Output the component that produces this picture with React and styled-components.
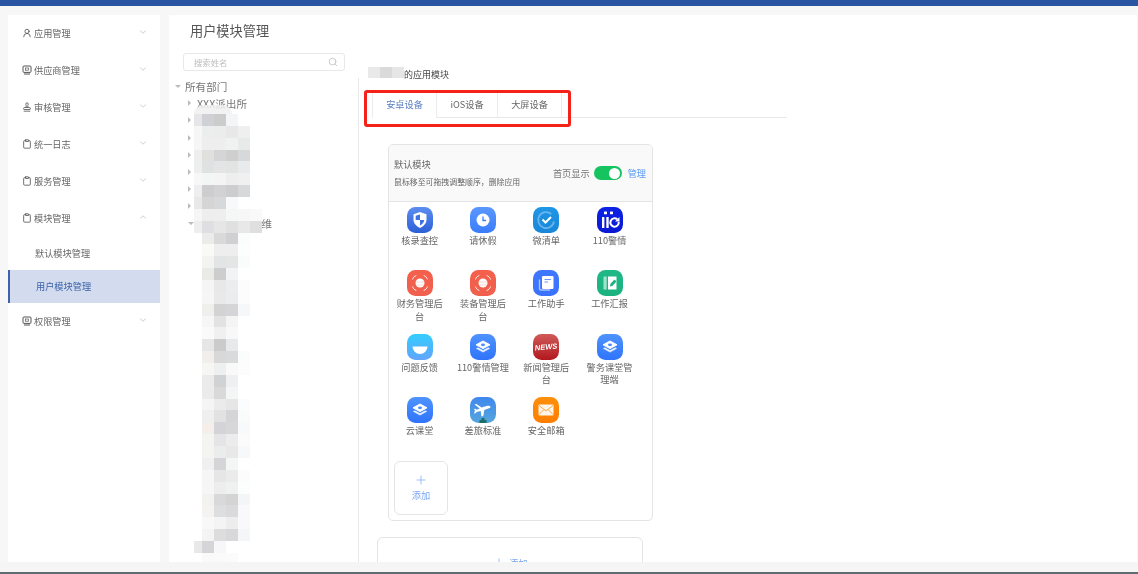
import React from 'react';
import styled, { createGlobalStyle } from 'styled-components';
import { ChevronDown, ChevronUp, Search, Plus, UserRound, Stamp, Clipboard } from 'lucide-react';

const GlobalStyle = createGlobalStyle`
    html, body {
        margin: 0;
        padding: 0;
        background: #f7f7f7;
    }
    * {
        box-sizing: border-box;
    }
`

function ScreenIcon() {
    return (
        <svg width="10" height="10" viewBox="0 0 10 10" fill="none" stroke="#555" strokeWidth="1">
            <rect x="1" y="1" width="8" height="6.4" rx="1" />
            <rect x="3.6" y="3" width="2.8" height="2.2" strokeWidth=".7" />
            <path d="M2 9h6" />
        </svg>
    )
}

const menu = [
    { name: '应用管理', icon: <UserRound size={10} color="#555" /> },
    { name: '供应商管理', icon: <ScreenIcon /> },
    { name: '审核管理', icon: <Stamp size={10} color="#555" /> },
    { name: '统一日志', icon: <Clipboard size={10} color="#555" /> },
    { name: '服务管理', icon: <Clipboard size={10} color="#555" /> },
    { name: '模块管理', icon: <Clipboard size={10} color="#555" />, open: true },
]

// 打码区域: 每行一组颜色, 第一格窄 (null 表示空)
const mosaicRows = [
    ['#e6e6e8', '#d0d1d5', '#cccccc', '#f4f5f6'],
    ['#f6f6f6', '#ecedED', '#ebecec', '#e8e8e9', '#efefef'],
    ['#f6f6f6', '#eeeeee', '#eeeeee', '#f0f1f1', '#e8e9e9'],
    ['#eeeeee', '#e0e0de', '#d5d5d7', '#cfcfd0', '#d7d8da'],
    ['#eeeeee', '#e0e1e3', '#e4e4e5', '#e2e3e3', '#e9eaeb'],
    ['#f7f7f7', '#f4f5f5', '#f4f4f4', '#eeeeee', '#f0f0f0'],
    ['#eeeeee', '#cdcdcf', '#d2d2d3', '#cdcdd0', '#d7d8da'],
    ['#e8e8e8', '#d5d5d5', '#d7d8da', '#f8f9fb'],
    ['#f6f6f6', '#eeeeee', '#eeeeee', '#f5f6f6', '#f7f7f7', '#f9f9f9'],
    ['#eeeeee', '#dfdfe1', '#e6e6e7', '#e0e0e1', '#e8e8e9', '#dfdfe0'],
    [null, '#ebebea', '#d9d9da', '#d0d0d2', '#fbfdfd'],
    [null, '#f9f9f8', '#eeeeee', '#eeeeee', '#fcfdfd'],
    [null, '#f3f3f2', '#e3e4e5', '#e4e5e5', '#fafcfc'],
    [null, '#eaeae9', '#cdcdce', '#f2f3f4'],
    [null, '#f5f5f5', '#e8e8e9', '#ecedee', '#fcfcfc'],
    [null, '#f6f6f6', '#e9e9ea', '#ebecee', '#fcfcfc'],
    [null, '#efefee', '#d3d3d4', '#d5d5d7', '#f6f7f9'],
    [null, '#f6f6f6', '#e2e2e3', '#f4f4f4'],
    [null, '#fafafa', '#f0f0f0', '#f8f8f8'],
    [null, '#e6e6e6', '#cbcbcb', '#e8e9eb'],
    [null, '#f0efee', '#d8d8d8', '#d9dadc', '#fbfdfd'],
    [null, '#f6f6f5', '#eef0ef', '#f9f9f9', '#fcfcfc'],
    [null, '#ebebeb', '#d1d2d4', '#eff0f1'],
    [null, '#ebebeb', '#d9d9d9', '#f4f6f5'],
    [null, '#f5f5f5', '#ebebeb', '#e6e6e7', '#fbfcfd'],
    [null, '#efefef', '#e2e2e2', '#d5d5d8', '#fafbfb'],
    [null, '#f4efeb', '#d4d4d8', '#d7d7da', '#f8f9fb'],
    [null, '#f4f4f3', '#e5e5e7', '#ececed', '#fbfbfc'],
    [null, '#f4f4f3', '#ebedec', '#e8e8e9', '#f7f8fa'],
    [null, '#f0f0f0', '#d5d5d8', '#f4f6f5'],
    [null, '#f6f6f6', '#e6e6e6', '#ebebec', '#fcfcfc'],
    [null, '#f6f6f6', '#ededed', '#eff0f0', '#fcfdfd'],
    [null, '#f2f2f1', '#d9d9dc', '#d4d4d4', '#f4f5f6'],
    [null, '#f4f3f1', '#dddee0', '#dadadc', '#f9f9fb'],
    [null, '#f8f8f8', '#f3f4f3', '#ededed', '#f9f9fb'],
    [null, '#f4f4f4', '#dddddd', '#d8d8db', '#f5f6f8'],
    ['#e8e8e8', '#d5d5d8', '#f7f7fa'],
    [null, '#fafafa', '#fafafa', '#fbfbfb'],
]

function Squircle({ id, from, to, children }) {
    return (
        <svg width="26" height="26" viewBox="0 0 26 26">
            <defs>
                <linearGradient id={id} x1="0" y1="0" x2="0" y2="1">
                    <stop offset="0" stopColor={from} />
                    <stop offset="1" stopColor={to} />
                </linearGradient>
            </defs>
            <rect width="26" height="26" rx="8.5" fill={`url(#${id})`} />
            {children}
        </svg>
    )
}

const Layers = () => (
    <>
        <path d="M13 7l7 3.800-7 3.800-7-3.800z" fill="#fff" stroke="#fff" strokeWidth="1" strokeLinejoin="round" />
        <ellipse cx="13" cy="10.800" rx="2" ry="1.400" fill="#4a8bff" />
        <path d="M6.500 14.500l1.300-.7 5.200 2.800 5.200-2.800 1.300.7-6.500 3.600z" fill="#fff" stroke="#fff" strokeWidth=".6" strokeLinejoin="round" opacity=".92" />
    </>
)

const Globe = () => (
    <>
        <circle cx="13" cy="13" r="4.500" fill="#fff" />
        <path d="M9 12h8M9.500 15h7" stroke="#f9b0a6" strokeWidth=".5" />
        <path d="M5.500 9.500C6 7.600 7.500 6 9.300 5.500M16.700 5.500c1.800.5 3.300 2.100 3.800 4M20.500 16.500c-.5 1.900-2 3.500-3.800 4M9.300 20.500c-1.800-.5-3.300-2.100-3.800-4" fill="none" stroke="#fff" strokeWidth="1" opacity=".85" />
    </>
)

function NewsText({ x, y, children }) {
    return <NewsLabel x={x} y={y} textAnchor="middle" transform="rotate(-5 13 13)">{children}</NewsLabel>
}

const apps = [
    {
        name: '核录查控',
        icon: (
            <Squircle id="a1" from="#5c8df0" to="#2b60d6">
                <path d="M13 5l6.500 2.300v5.200c0 4-2.800 6.800-6.500 8.500-3.700-1.700-6.500-4.500-6.500-8.500V7.300z" fill="#fff" />
                <path d="M13 7.500v5.500H8.700V8.800zM13 13h4.300c-.3 2.700-2 4.400-4.300 5.600z" fill="#3f72e2" />
            </Squircle>
        ),
    },
    {
        name: '请休假',
        icon: (
            <Squircle id="a2" from="#5a97ff" to="#3a7dfb">
                <circle cx="13" cy="13" r="6.500" fill="#fff" />
                <path d="M13 9.500V13.500h3" fill="none" stroke="#3a7dfb" strokeWidth="1.300" />
            </Squircle>
        ),
    },
    {
        name: '微清单',
        icon: (
            <Squircle id="a3" from="#1f96e6" to="#1a86d8">
                <path d="M18.300 7A8 8 0 1 0 21 14.500" fill="none" stroke="#66b5ee" strokeWidth="1.800" />
                <path d="M9.500 12.500l3 3 5.500-5.500" fill="none" stroke="#fff" strokeWidth="2" />
            </Squircle>
        ),
    },
    {
        name: '110警情',
        icon: (
            <Squircle id="a4" from="#0d22e6" to="#0a18d2">
                <rect x="7" y="4.500" width="3" height="2.800" rx=".6" fill="#fff" />
                <rect x="13" y="4.500" width="3" height="2.800" rx=".6" fill="#fff" />
                <rect x="5" y="10" width="2.400" height="11" rx=".6" fill="#fff" />
                <rect x="9.300" y="10" width="2.400" height="11" rx=".6" fill="#fff" />
                <path d="M20.300 12.300A4.200 4.200 0 1 0 21.700 14.800" fill="none" stroke="#fff" strokeWidth="2" />
                <path d="M22.500 10v4.500h-4.500z" fill="#fff" />
            </Squircle>
        ),
    },
    {
        name: '财务管理后台',
        icon: <Squircle id="a5" from="#f4604c" to="#f0604e"><Globe /></Squircle>,
    },
    {
        name: '装备管理后台',
        icon: <Squircle id="a6" from="#f4604c" to="#f0604e"><Globe /></Squircle>,
    },
    {
        name: '工作助手',
        icon: (
            <Squircle id="a7" from="#4077ff" to="#3b72fb">
                <rect x="9" y="6" width="11.500" height="13" rx="1.200" fill="#fff" />
                <path d="M11.500 9.500h6.500M11.500 12h3.500" stroke="#6b95ff" strokeWidth="1" />
                <path d="M6.500 9.500v9a1.500 1.500 0 001.500 1.500h9" fill="none" stroke="#a9c3ff" strokeWidth="1.400" />
            </Squircle>
        ),
    },
    {
        name: '工作汇报',
        icon: (
            <Squircle id="a8" from="#1fb886" to="#1bb280">
                <rect x="6.500" y="6.500" width="3.200" height="13" fill="#9fe3cb" />
                <path d="M11 6.500h8.500v13H11z" fill="#fff" />
                <path d="M13 16.500l.5-2.700 4-4.300 2 2-4 4.300z" fill="#1bb280" />
            </Squircle>
        ),
    },
    {
        name: '问题反馈',
        icon: (
            <Squircle id="a9" from="#33cdff" to="#63a4fb">
                <path d="M5.500 12.500h15a7.500 7.500 0 01-15 0z" fill="#fff" />
            </Squircle>
        ),
    },
    {
        name: '110警情管理',
        icon: <Squircle id="a10" from="#4f93ff" to="#2f74fb"><Layers /></Squircle>,
    },
    {
        name: '新闻管理后台',
        icon: (
            <Squircle id="a11" from="#cf5b58" to="#b2181e">
                <NewsText x="13" y="15.500">NEWS</NewsText>
            </Squircle>
        ),
    },
    {
        name: '警务课堂管理端',
        icon: <Squircle id="a12" from="#4f93ff" to="#2f74fb"><Layers /></Squircle>,
    },
    {
        name: '云课堂',
        icon: <Squircle id="a13" from="#4f93ff" to="#2f74fb"><Layers /></Squircle>,
    },
    {
        name: '差旅标准',
        icon: (
            <Squircle id="a14" from="#3f88ee" to="#55a6dc">
                <path d="M4.500 7.500l2-.5 5 3.500 6-1.700c1.500-.4 3 .4 3 1.200s-1 1.200-2.200 1.600l-4 1.400-1 6-1.800.5-.8-5.500-4 1-1.500 1.500-1.200-.3 1-2.700-1-1.500 1.500-.3 1.200 1 3-1.300z" fill="#fff" />
                <path d="M9.500 26v-3h2v-2h3v2h2v3z" fill="#1b6f66" />
            </Squircle>
        ),
    },
    {
        name: '安全邮箱',
        icon: (
            <Squircle id="a15" from="#ff8f0a" to="#ff7e00">
                <rect x="5.500" y="7.500" width="15" height="11" rx="1" fill="#fff" opacity=".92" />
                <path d="M6 8.500l7 5.500 7-5.500M6 17.500l5-5M20 17.500l-5-5" fill="none" stroke="#ff9c2e" strokeWidth=".9" />
            </Squircle>
        ),
    },
]

export default function App() {
    return (
        <Page>
            <GlobalStyle />
            <TopBar />
            <Workspace>
                <Sidebar>
                    {menu.map((item) => (
                        <MenuItem key={item.name}>
                            <MenuLabel>{item.icon}{item.name}</MenuLabel>
                            {item.open ? <ChevronUp size={10} color="#c4c4c4" /> : <ChevronDown size={10} color="#c4c4c4" />}
                        </MenuItem>
                    ))}
                    <SubItem>默认模块管理</SubItem>
                    <SubItem $active>用户模块管理</SubItem>
                    <MenuItem>
                        <MenuLabel><ScreenIcon />权限管理</MenuLabel>
                        <ChevronDown size={10} color="#c4c4c4" />
                    </MenuItem>
                </Sidebar>
                <Main>
                    <Title>用户模块管理</Title>
                    <Content>
                        <LeftPanel>
                            <SearchBox>
                                搜索姓名
                                <Search size={10} color="#c0c0c0" />
                            </SearchBox>
                            <Tree>
                                <TreeRow>
                                    <ArrowDown />
                                    所有部门
                                </TreeRow>
                                <TreeRow $child>
                                    <ArrowRight />
                                    XXX派出所
                                </TreeRow>
                                {[1, 2, 3, 4, 5, 6].map((n) => (
                                    <TreeRow $child key={n}>
                                        <ArrowRight />
                                    </TreeRow>
                                ))}
                                <TreeRow $child>
                                    <ArrowDown />
                                    <HiddenName>维</HiddenName>
                                </TreeRow>
                                <Mosaic>
                                    <MosaicCap />
                                    {mosaicRows.map((row, i) => (
                                        <MosaicRow key={i}>
                                            {row.map((color, j) => (
                                                <MosaicCell key={j} $wide={j > 0} $color={color} />
                                            ))}
                                        </MosaicRow>
                                    ))}
                                </Mosaic>
                            </Tree>
                        </LeftPanel>
                        <RightPanel>
                            <Heading>
                                <HeadingMosaic>
                                    <MosaicCell $wide $color="#e9e9e9" />
                                    <MosaicCell $wide $color="#dadada" />
                                    <MosaicCell $wide $color="#e6e6e6" />
                                </HeadingMosaic>
                                的应用模块
                            </Heading>
                            <Tabs>
                                <Tab $active $width={65}>安卓设备</Tab>
                                <Tab $width={61}>iOS设备</Tab>
                                <Tab $width={64}>大屏设备</Tab>
                                <RedMark />
                            </Tabs>
                            <Card>
                                <CardHead>
                                    <div>
                                        <CardTitle>默认模块</CardTitle>
                                        <CardHint>鼠标移至可拖拽调整顺序，删除应用</CardHint>
                                    </div>
                                    <HeadActions>
                                        首页显示
                                        <Toggle />
                                        <ManageLink>管理</ManageLink>
                                    </HeadActions>
                                </CardHead>
                                <AppGrid>
                                    {apps.map((app) => (
                                        <AppItem key={app.name}>
                                            {app.icon}
                                            <AppName>{app.name}</AppName>
                                        </AppItem>
                                    ))}
                                </AppGrid>
                                <AddTile>
                                    <Plus size={14} strokeWidth={1.2} />
                                    添加
                                </AddTile>
                            </Card>
                            <NextCard>
                                <Plus size={14} strokeWidth={1.2} />
                                <span>添加</span>
                            </NextCard>
                        </RightPanel>
                    </Content>
                </Main>
            </Workspace>
            <BottomStrip />
        </Page>
    )
}

const Page = styled.div`
    width: 1138px;
    height: 574px;
    overflow: hidden;
    display: flex;
    flex-direction: column;
    background: #f7f7f7;
    font-family: "Noto Sans CJK SC", "Liberation Sans", sans-serif;
    color: #666;
    filter: blur(0.4px);
`

const TopBar = styled.div`
    height: 6px;
    background: #2a55a3;
`

const Workspace = styled.div`
    display: flex;
    height: 547px;
    margin-top: 9px;
    padding-left: 8px;
`

const Sidebar = styled.div`
    width: 152px;
    margin-right: 9px;
    background: #fff;
`

const MenuItem = styled.div`
    height: 37px;
    padding: 0 12px 2px 14px;
    display: flex;
    align-items: center;
    justify-content: space-between;
    font-size: 9.2px;
    color: #666;
    > svg {
        margin-top: -2px;
    }
`

const MenuLabel = styled.span`
    display: flex;
    align-items: center;
    gap: 2px;
    svg {
        margin-top: 1px;
    }
`

const SubItem = styled.div`
    height: 33px;
    display: flex;
    align-items: center;
    font-size: 9.2px;
    padding-bottom: 2px;
    padding-left: ${(props) => (props.$active ? '26px' : '27px')};
    color: ${(props) => (props.$active ? '#3d62a8' : '#666')};
    background: ${(props) => (props.$active ? '#d2dcee' : 'transparent')};
    border-left: ${(props) => (props.$active ? '2px solid #3f62ae' : 'none')};
`

const Main = styled.div`
    width: 968px;
    background: #fff;
    overflow: hidden;
`

const Title = styled.div`
    height: 38px;
    padding: 7px 0 0 21px;
    font-size: 13.2px;
    line-height: 18px;
    color: #555;
`

const Content = styled.div`
    display: flex;
    height: 509px;
`

const LeftPanel = styled.div`
    width: 190px;
    display: flex;
    flex-direction: column;
`

const SearchBox = styled.div`
    width: 162px;
    height: 18px;
    margin-left: 14px;
    padding: 0 6px 1px 10px;
    display: flex;
    align-items: center;
    justify-content: space-between;
    border: 1px solid #e8e8e8;
    border-radius: 3px;
    font-size: 8.4px;
    color: #bdbdbd;
`

const Tree = styled.div`
    position: relative;
    flex: 1;
    margin-top: 7px;
    padding: 0.5px 0 0 6px;
    border-right: 1px solid #e8e8e8;
    font-size: 10.6px;
    color: #777;
`

const TreeRow = styled.div`
    height: 17.2px;
    padding-bottom: 2px;
    display: flex;
    align-items: center;
    padding-left: ${(props) => (props.$child ? '12.500px' : '0')};
`

const ArrowDown = styled.i`
    width: 0;
    height: 0;
    margin-right: 4px;
    border-style: solid;
    border-width: 3.500px 3px 0;
    border-color: #bbb transparent transparent;
`

const ArrowRight = styled.i`
    width: 0;
    height: 0;
    margin: 0 6px 0 0.500px;
    border-style: solid;
    border-width: 3px 0 3px 3.500px;
    border-color: transparent transparent transparent #bbb;
`

const HiddenName = styled.span`
    margin-left: 64px;
`

const Mosaic = styled.div`
    position: absolute;
    top: 36px;
    left: 25px;
`

const MosaicCap = styled.div`
    position: absolute;
    top: -9px;
    left: 0;
    width: 38px;
    height: 9px;
    border-radius: 18px 18px 0 0;
    background: rgba(240, 240, 240, 0.85);
`

const MosaicRow = styled.div`
    display: flex;
    height: 11.860px;
`

const MosaicCell = styled.div`
    width: ${(props) => (props.$wide ? '12px' : '8px')};
    background: ${(props) => props.$color || 'transparent'};
`

const RightPanel = styled.div`
    flex: 1;
    padding-top: 13px;
`

const Heading = styled.div`
    position: relative;
    height: 19px;
    padding: 3px 0 0 45px;
    font-size: 9px;
    line-height: 12px;
    color: #444;
`

const HeadingMosaic = styled.div`
    position: absolute;
    top: 1px;
    left: 9px;
    height: 11px;
    display: flex;
`

const Tabs = styled.div`
    position: relative;
    width: 415px;
    height: 26px;
    margin: 7px 0 0 13px;
    display: flex;
    border-bottom: 1px solid #e8e8e8;
`

const Tab = styled.div`
    width: ${(props) => props.$width}px;
    height: ${(props) => (props.$active ? '26px' : '25px')};
    padding-bottom: 2px;
    display: flex;
    align-items: center;
    justify-content: center;
    font-size: 9.2px;
    color: ${(props) => (props.$active ? '#5b7fc4' : '#666')};
    background: #fff;
    border-right: 1px solid #ececec;
    border-left: ${(props) => (props.$active ? '1px solid #ececec' : 'none')};
`

const RedMark = styled.div`
    position: absolute;
    top: -2px;
    left: -8px;
    width: 207px;
    height: 37px;
    border: 3px solid #f5221a;
    border-radius: 3px;
`

const Card = styled.div`
    width: 265px;
    height: 377px;
    margin: 26px 0 0 29px;
    border: 1px solid #e4e4e4;
    border-radius: 5px;
    overflow: hidden;
`

const CardHead = styled.div`
    height: 57px;
    padding: 13px 6px 0 5px;
    display: flex;
    justify-content: space-between;
    background: #f9f9f9;
    border-bottom: 1px solid #e4e4e4;
`

const CardTitle = styled.div`
    font-size: 9.2px;
    line-height: 13px;
    color: #666;
`

const CardHint = styled.div`
    margin-top: 5px;
    font-size: 7.900px;
    line-height: 12px;
    color: #666;
`

const HeadActions = styled.div`
    display: flex;
    align-items: center;
    height: 30px;
    font-size: 9.2px;
    color: #777;
`

const Toggle = styled.span`
    position: relative;
    width: 28px;
    height: 14px;
    margin: 0 6px 0 4px;
    border-radius: 7px;
    background: #15c45f;
    &::after {
        content: '';
        position: absolute;
        top: 1.500px;
        right: 2px;
        width: 11px;
        height: 11px;
        border-radius: 50%;
        background: #fff;
    }
`

const ManageLink = styled.span`
    color: #5b9bf5;
`

const AppGrid = styled.div`
    display: grid;
    grid-template-columns: repeat(4, 63.300px);
    grid-auto-rows: 63.300px;
    margin-left: -1px;
    padding: 5px 0 1px;
`

const AppItem = styled.div`
    display: flex;
    flex-direction: column;
    align-items: center;
    text-align: center;
`

const AppName = styled.div`
    width: 53px;
    margin-top: 1px;
    font-size: 9.2px;
    line-height: 12.700px;
    color: #666;
`

const NewsLabel = styled.text`
    font-family: "Liberation Sans", sans-serif;
    font-size: 7.500px;
    font-weight: 700;
    font-style: italic;
    fill: #fff;
`

const AddTile = styled.div`
    width: 54px;
    height: 54px;
    margin-left: 5px;
    padding-bottom: 2px;
    display: flex;
    flex-direction: column;
    align-items: center;
    justify-content: center;
    gap: 1px;
    border: 1px solid #e4e4e4;
    border-radius: 6px;
    font-size: 9.2px;
    color: #7aa5f5;
`

const NextCard = styled.div`
    width: 266px;
    height: 60px;
    margin: 16px 0 0 18px;
    padding-top: 18px;
    display: flex;
    justify-content: center;
    gap: 3px;
    border: 1px solid #e4e4e4;
    border-radius: 6px;
    font-size: 9.2px;
    color: #7aa5f5;
`

const BottomStrip = styled.div`
    height: 12px;
    margin-top: auto;
    background: #f5f5f5;
    border-bottom: 2px solid #5f6b6f;
`
